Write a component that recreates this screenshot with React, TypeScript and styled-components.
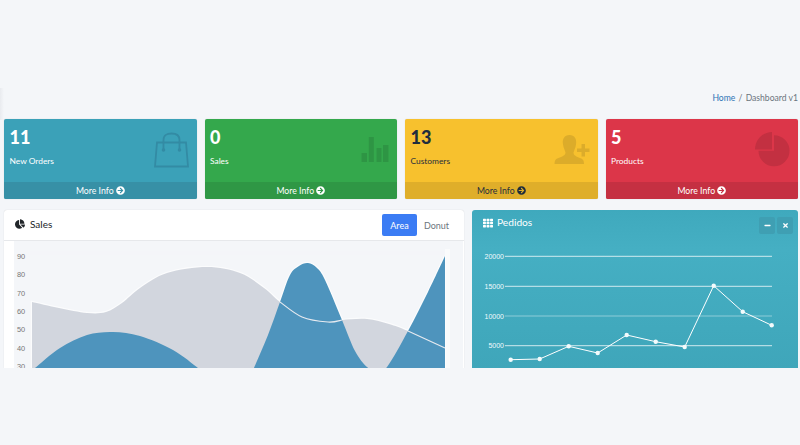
import React from 'react';
import styled, { createGlobalStyle } from 'styled-components';
import { FaArrowCircleRight, FaChartPie, FaMinus, FaTh, FaTimes } from 'react-icons/fa';

const GlobalStyle = createGlobalStyle`
  html, body {
    margin: 0;
    padding: 0;
    background: #f4f6f9;
    font-family: Lato, 'Noto Sans', sans-serif;
  }
`;

const Page = styled.div`
  position: relative;
  box-sizing: border-box;
  width: 800px;
  height: 368px;
  overflow: hidden;
  padding: 92px 2px 0 4px;

  &::before {
    content: '';
    position: absolute;
    top: 88px;
    left: 0;
    width: 4px;
    height: 32px;
    background: linear-gradient(90deg, #e9ebef, #f4f6f9);
  }
`;

const Breadcrumb = styled.div`
  display: flex;
  justify-content: flex-end;
  gap: 1px;
  height: 27px;
  font-size: 8.6px;
  line-height: 13px;
  color: #6c757d;
  & > a {
    color: #2f74b5;
  }
`;

const StatRow = styled.div`
  display: grid;
  grid-template-columns: repeat(4, 1fr);
  gap: 8px;
  height: 80px;
`;

const StatCard = styled.div<{ $bg: string; $bar: string; $fg: string; $icon: string }>`
  position: relative;
  display: flex;
  flex-direction: column;
  background: ${(p) => p.$bg};
  color: ${(p) => p.$fg};
  border-radius: 2px;
  box-shadow: 0 0 1px rgba(0, 0, 0, 0.2);
  overflow: hidden;
  & > footer {
    background: ${(p) => p.$bar};
  }
  & > svg {
    color: ${(p) => p.$icon};
  }
`;

const StatBody = styled.div`
  flex: 1;
  padding: 6px 5.5px 0;
`;

const StatValue = styled.div`
  font-size: 18px;
  font-weight: 900;
  line-height: 24px;
`;

const StatLabel = styled.div`
  margin-top: 6px;
  font-size: 8.4px;
  line-height: 12px;
`;

const StatFooter = styled.footer`
  display: flex;
  align-items: center;
  justify-content: center;
  gap: 2px;
  height: 17px;
  font-size: 8.7px;
  & > svg {
    width: 9px;
    height: 9px;
  }
`;

const StatIcon = styled.svg`
  position: absolute;
  top: 12px;
  right: 8px;
  width: 36px;
  height: 38px;
`;

const ChartRow = styled.div`
  display: grid;
  grid-template-columns: 460px 326px;
  gap: 8px;
  margin-top: 11px;
`;

const SalesCard = styled.section`
  background: #fff;
  border-radius: 3px 3px 0 0;
  box-shadow: 0 0 1px rgba(0, 0, 0, 0.2);
  height: 158px;
  overflow: hidden;
`;

const SalesHeader = styled.header`
  display: flex;
  align-items: center;
  gap: 2px;
  box-sizing: border-box;
  height: 31px;
  padding: 0 10px 0 11px;
  border-bottom: 1px solid #e6e8eb;
`;

const SalesTitle = styled.h3`
  display: flex;
  align-items: center;
  gap: 5px;
  flex: 1;
  margin: 0 0 3px;
  font-size: 10px;
  font-weight: 400;
  color: #212529;
  & > svg {
    width: 10px;
    height: 10px;
  }
`;

const Tab = styled.button<{ $active?: boolean }>`
  width: 35px;
  height: 22px;
  padding: 0;
  border: 0;
  border-radius: 2px;
  font-family: inherit;
  font-size: 9px;
  color: ${(p) => (p.$active ? '#fff' : '#6c757d')};
  background: ${(p) => (p.$active ? '#3b7cf4' : 'transparent')};
`;

const SalesBody = styled.div`
  margin-left: 10px;
  margin-right: 1px;
  background: #f4f6f9;
  height: 127px;
`;

const OrdersCard = styled.section`
  color: #fff;
  height: 158px;
  overflow: hidden;
  border-radius: 3px 3px 0 0;
  background: linear-gradient(180deg, #3fa9bd 0%, #45afc3 25%, #3fa6ba 100%);
`;

const OrdersHeader = styled.header`
  display: flex;
  align-items: flex-start;
  height: 40px;
  padding: 7px 5px 0 11px;
  box-sizing: border-box;
`;

const OrdersTitle = styled.h3`
  display: flex;
  align-items: center;
  gap: 4px;
  flex: 1;
  margin: 0;
  font-size: 10.2px;
  line-height: 11px;
  font-weight: 400;
  & > svg {
    width: 10px;
    height: 10px;
  }
`;

const ToolButton = styled.button`
  display: flex;
  align-items: center;
  justify-content: center;
  width: 16px;
  height: 17px;
  margin-left: 2px;
  padding: 0;
  border: 0;
  border-radius: 2px;
  color: #fff;
  background: #3f9fb3;
  & > svg {
    width: 7px;
    height: 7px;
  }
`;

const ChartSvg = styled.svg`
  display: block;
`;

type Point = [number, number];

const ordersPoints: Point[] = [
  [38.7, 109.7],
  [67.7, 109],
  [96.7, 96.3],
  [125.7, 103],
  [154.7, 85],
  [183.7, 91.7],
  [212.7, 97],
  [241.7, 35.7],
  [270.7, 61.7],
  [299.7, 75.3],
];

const salesGrid = [
  ['90', 15],
  ['80', 33.5],
  ['70', 52],
  ['60', 70],
  ['50', 88],
  ['40', 107],
  ['30', 125],
] as const;

const ordersGrid = [
  ['20000', 6.3],
  ['15000', 36.3],
  ['10000', 66],
  ['5000', 95.7],
] as const;

const greyTop: Point[] = [
  [18, 61], [45, 67], [73, 72], [92, 71], [108, 62], [126, 47], [153, 32], [193, 26], [226, 32], [250, 47],
  [266, 61], [288, 76], [314, 81], [328, 79], [353, 78], [375, 83], [394, 90], [431, 107],
];

const blueLeft: Point[] = [
  [21, 127], [46, 107], [73, 94], [99, 91], [126, 95], [159, 109], [184, 127],
];

const blueRight: Point[] = [
  [240, 127], [254, 94], [266, 61], [276, 34], [285, 25], [294, 22], [303, 27], [311, 39], [328, 79], [341, 110],
  [353, 126], [363, 130], [373, 126], [394, 90], [414, 51], [431, 15],
];

// catmull-rom through the points, good enough for chart.js style curves
const smooth = (pts: Point[]) => {
  let d = `M${pts[0][0]} ${pts[0][1]}`;
  for (let i = 0; i < pts.length - 1; i++) {
    const p0 = pts[i - 1] ?? pts[i];
    const p1 = pts[i];
    const p2 = pts[i + 1];
    const p3 = pts[i + 2] ?? p2;
    const c1 = [p1[0] + (p2[0] - p0[0]) / 6, p1[1] + (p2[1] - p0[1]) / 6];
    const c2 = [p2[0] - (p3[0] - p1[0]) / 6, p2[1] - (p3[1] - p1[1]) / 6];
    d += `C${c1[0]} ${c1[1]} ${c2[0]} ${c2[1]} ${p2[0]} ${p2[1]}`;
  }
  return d;
};

const greyArea = `${smooth(greyTop)}V127H18Z`;
const blueArea = `${smooth(blueLeft)}Z${smooth(blueRight)}V131H240Z`;
const lineOverBlue = `${smooth(greyTop.slice(10, 14))}${smooth(greyTop.slice(16))}`;

const SalesChart = () => (
  <ChartSvg width="449" height="127" viewBox="0 0 449 127">
    <rect x="431" y="8" width="5" height="119" fill="#fff" opacity="0.5" />
    <path d={greyArea} fill="#fff" stroke="#fff" strokeWidth="2.5" opacity="0.7" />
    <path d={blueArea} fill="#fff" stroke="#fff" strokeWidth="2.5" opacity="0.7" />
    <path d={greyArea} fill="#d2d6de" />
    <path d={blueArea} fill="#4e94bd" />
    <path d={lineOverBlue} fill="none" stroke="#e6eaf0" strokeWidth="1.2" />
    {salesGrid.map(([label, y]) => (
      <text key={label} x="3" y={y + 2.5} fontFamily="Liberation Sans" fontSize="7.4" fill="#777">
        {label}
      </text>
    ))}
  </ChartSvg>
);

const OrdersChart = () => (
  <ChartSvg width="326" height="118" viewBox="0 0 326 118">
    {ordersGrid.map(([label, y]) => (
      <g key={label}>
        <line x1="33" x2="300" y1={y} y2={y} stroke="#fff" strokeOpacity={label === '10000' ? 0.4 : 0.75} strokeWidth="1" />
        <text x="32" y={y + 2.5} textAnchor="end" fontFamily="Liberation Sans" fontSize="7" fill="#f2fafc">
          {label}
        </text>
      </g>
    ))}
    <polyline points={ordersPoints.map((p) => p.join(',')).join(' ')} fill="none" stroke="#fff" strokeWidth="1" />
    {ordersPoints.map(([x, y]) => (
      <circle key={x} cx={x} cy={y} r="2.2" fill="#f4fbfc" />
    ))}
  </ChartSvg>
);

const BagIcon = () => (
  <StatIcon viewBox="0 0 36 38" fill="none" stroke="currentColor" strokeWidth="1.8">
    <path d="M4 11.500H33L35 35.500H2Z" />
    <path d="M10.500 18V9C10.500 4 14 2.500 18.500 2.500S26.500 4 26.500 9V18" />
    <circle cx="10.500" cy="19" r="1.800" fill="currentColor" stroke="none" />
    <circle cx="26.500" cy="19" r="1.800" fill="currentColor" stroke="none" />
  </StatIcon>
);

const BarsIcon = () => (
  <StatIcon viewBox="0 0 36 38" fill="currentColor">
    <rect x="8.500" y="22" width="5.500" height="9" />
    <rect x="15.800" y="6" width="5" height="25" />
    <rect x="23.500" y="17" width="5" height="14" />
    <rect x="30" y="14" width="5.500" height="17" />
  </StatIcon>
);

const PersonAddIcon = () => (
  <StatIcon viewBox="0 0 36 38" fill="currentColor">
    <path d="M15.500 4C20.500 4 23 8 22 13.500C21.500 17 20 19.500 19.500 21.500C19.500 24.500 22.500 25.500 26 27C29 28 30 29.500 30 33H0.500C0.500 29.500 1.500 28 4.500 27C8 25.500 11.500 24.500 11.500 21.500C11 19.500 9.500 17 9 13.500C8 8 10.500 4 15.500 4Z" />
    <path d="M27.500 13H31V17.500H35.500V21H31V25.500H27.500V21H23V17.500H27.500Z" />
  </StatIcon>
);

const PieIcon = () => (
  <StatIcon viewBox="0 0 36 38" fill="currentColor">
    <path d="M18 1V18.500H1C1 9 8.500 1 18 1Z" />
    <path d="M20 4.200A15.500 15.500 0 1 1 4.500 19.700H20Z" />
  </StatIcon>
);

const stats = [
  { value: '11', label: 'New Orders', bg: '#3ba1b8', bar: '#3790a6', fg: '#fff', icon: '#338ba4', Icon: BagIcon },
  { value: '0', label: 'Sales', bg: '#34a84c', bar: '#2f9745', fg: '#fff', icon: '#2e9544', Icon: BarsIcon },
  { value: '13', label: 'Customers', bg: '#f7c12e', bar: '#dfae2a', fg: '#1f2d3d', icon: '#dcac2a', Icon: PersonAddIcon },
  { value: '5', label: 'Products', bg: '#dc3649', bar: '#c53042', fg: '#fff', icon: '#c33041', Icon: PieIcon },
];

const App: React.FC = () => (
  <>
    <GlobalStyle />
    <Page>
      <Breadcrumb>
        <a>Home</a>
        <span>&nbsp;/&nbsp;</span>
        <span>Dashboard v1</span>
      </Breadcrumb>
      <StatRow>
        {stats.map(({ value, label, bg, bar, fg, icon, Icon }) => (
          <StatCard key={label} $bg={bg} $bar={bar} $fg={fg} $icon={icon}>
            <StatBody>
              <StatValue>{value}</StatValue>
              <StatLabel>{label}</StatLabel>
            </StatBody>
            <Icon />
            <StatFooter>
              More Info <FaArrowCircleRight />
            </StatFooter>
          </StatCard>
        ))}
      </StatRow>
      <ChartRow>
        <SalesCard>
          <SalesHeader>
            <SalesTitle>
              <FaChartPie /> Sales
            </SalesTitle>
            <Tab $active>Area</Tab>
            <Tab>Donut</Tab>
          </SalesHeader>
          <SalesBody>
            <SalesChart />
          </SalesBody>
        </SalesCard>
        <OrdersCard>
          <OrdersHeader>
            <OrdersTitle>
              <FaTh /> Pedidos
            </OrdersTitle>
            <ToolButton>
              <FaMinus />
            </ToolButton>
            <ToolButton>
              <FaTimes />
            </ToolButton>
          </OrdersHeader>
          <OrdersChart />
        </OrdersCard>
      </ChartRow>
    </Page>
  </>
);

export default App;
